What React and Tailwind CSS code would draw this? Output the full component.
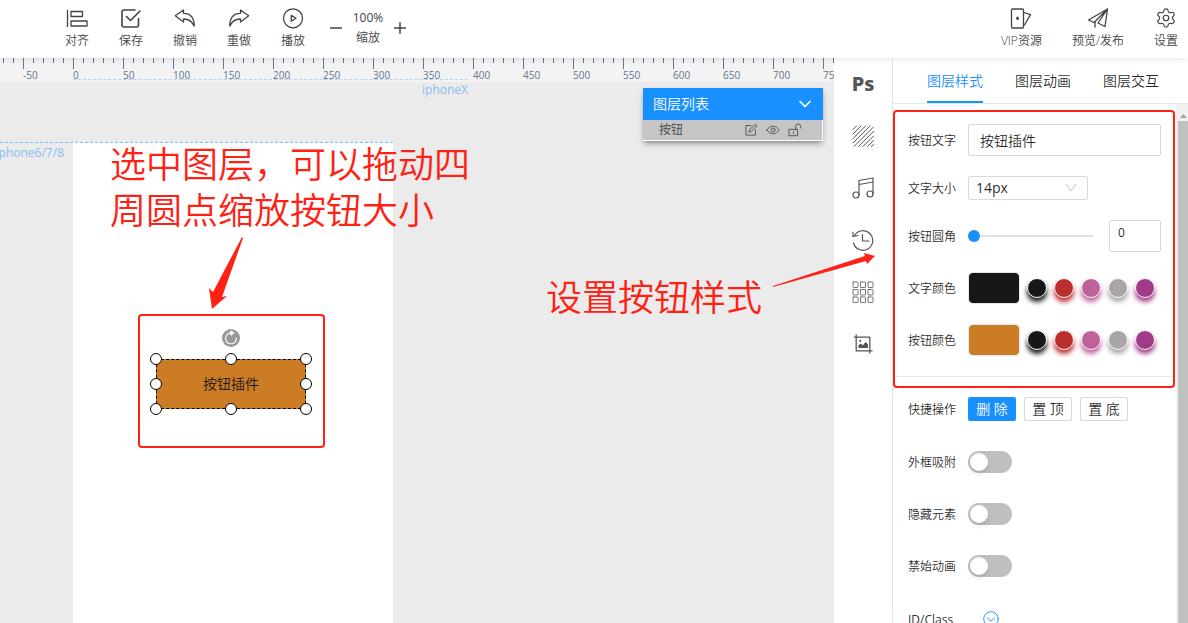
import React, { useState } from "react";
import { Settings, ChevronDown } from "lucide-react";

const Icon = ({ children, size = 22, width = 1.3 }) => (
  <svg
    width={size}
    height={size}
    viewBox="0 0 22 22"
    fill="none"
    stroke="currentColor"
    strokeWidth={width}
    strokeLinejoin="round"
    strokeLinecap="round"
    aria-hidden="true"
  >
    {children}
  </svg>
);

const tools = [
  {
    label: "对齐",
    icon: (
      <Icon>
        <path d="M1.5 3.5v16M5 4.5h11.5v5H5zM5 14h16v5H5z" />
      </Icon>
    ),
  },
  {
    label: "保存",
    icon: (
      <Icon width={1.6}>
        <path d="M15 3H4a2 2 0 0 0-2 2v13a2 2 0 0 0 2 2h12.5a2 2 0 0 0 2-2v-6.5" />
        <path d="M6.5 9.5l4 4L20 4" />
      </Icon>
    ),
  },
  {
    label: "撤销",
    icon: (
      <Icon>
        <path d="M1.3 8.7L9.5 3v3.3C16 6.3 20.2 10 20.3 19c-2.6-5-6.3-7.2-10.8-7v3z" />
      </Icon>
    ),
  },
  {
    label: "重做",
    icon: (
      <Icon>
        <path d="M20.7 8.7L12.5 3v3.3C6 6.3 1.8 10 1.7 19c2.6-5 6.3-7.2 10.8-7v3z" />
      </Icon>
    ),
  },
  {
    label: "播放",
    icon: (
      <Icon>
        <circle cx="11" cy="11.3" r="9.5" />
        <path d="M9.3 8.3v6l4.7-3z" />
      </Icon>
    ),
  },
];

const actions = [
  {
    label: "VIP资源",
    icon: (
      <Icon>
        <rect x="1.5" y="2" width="12" height="19" rx="1" />
        <path d="M14 5.5l6.5 2.2L14.5 18" />
        <path d="M7.5 10.2l1 1.2-1 1.2-1-1.2z" fill="currentColor" />
      </Icon>
    ),
  },
  {
    label: "预览/发布",
    icon: (
      <Icon>
        <path d="M20.5 2L1.5 13l5.5 2.5L20.5 2l-2.5 17.5-7-3.5L20.5 2" />
        <path d="M8 15.5V20" />
      </Icon>
    ),
  },
  { label: "设置", icon: <Settings size={22} strokeWidth={1.3} /> },
];

const rail = [
  {
    label: "Ps",
    icon: <span className="font-['Noto_Sans',sans-serif] text-xl font-extrabold">Ps</span>,
  },
  {
    label: "背景",
    icon: (
      <Icon size={22} width={1}>
        <path d="M1 4.5L4.5 1M1 9l8-8M1 13.5L13.5 1M1 18L18 1M2 21.5L21.5 2M6.5 21.5l15-15M11 21.5L21.5 11M15.5 21.5l6-6M19.5 21.5l2-2" />
      </Icon>
    ),
  },
  {
    label: "音乐",
    icon: (
      <Icon size={22} width={1.2}>
        <circle cx="4" cy="18" r="3" />
        <circle cx="18" cy="17" r="3" />
        <path d="M7 18V3.5l14-2.5v16M7 7.5L21 5" />
      </Icon>
    ),
  },
  {
    label: "历史",
    icon: (
      <Icon size={22} width={1.2}>
        <path d="M2.5 6.5A9.800 9.800 0 1 1 1.500 14M1 3v4.500l5-1M10.500 5.500V12h6.500" />
      </Icon>
    ),
  },
  {
    label: "组件",
    icon: (
      <Icon size={22} width={0.8}>
        {[1, 8.5, 16].map((y) =>
          [1, 8.5, 16].map((x) => (
            <rect key={`${x}-${y}`} x={x} y={y} width="5" height="5.5" rx="0.5" />
          ))
        )}
      </Icon>
    ),
  },
  {
    label: "图片",
    icon: (
      <Icon size={20} width={1.4}>
        <path d="M3.5 1v17.5H21M1.5 3.5h17V21" />
        <path d="M6 15.5v-3l2.5-2 2.5 2 3-4 2.5 3v4z" fill="currentColor" stroke="none" />
        <circle cx="8" cy="7.5" r="1.2" fill="currentColor" stroke="none" />
      </Icon>
    ),
  },
];

const colors = [
  "bg-[#161817] shadow-[0_4px_5px_#161817]",
  "bg-[#bb2e2e] shadow-[0_4px_5px_#bb2e2e]",
  "bg-[#bf629b] shadow-[0_4px_5px_#bf629b]",
  "bg-[#aaa5a8] shadow-[0_4px_5px_#aaa5a8]",
  "bg-[#a23b87] shadow-[0_4px_5px_#a23b87]",
];

const handles = [
  "left-0 top-0",
  "left-1/2 top-0",
  "left-full top-0",
  "left-0 top-1/2",
  "left-full top-1/2",
  "left-0 top-full",
  "left-1/2 top-full",
  "left-full top-full",
];

const marks = Array.from({ length: 17 }, (_, i) => (i - 1) * 50);

const ToolButton = ({ label, icon, className = "" }) => (
  <button className={`flex flex-col items-center gap-1 text-xs ${className}`}>
    {icon}
    <span className="leading-4">{label}</span>
  </button>
);

const Header = () => (
  <header className="relative z-10 flex h-[58px] shrink-0 items-start justify-between bg-white pt-[7px] pr-[10px] pl-[50px] text-[#444] shadow-md shadow-black/5">
    <div className="flex">
      {tools.map((tool) => (
        <ToolButton key={tool.label} {...tool} className="w-[54px]" />
      ))}
      <div className="flex items-center pl-2">
        <button aria-label="缩小" className="flex w-4 justify-center">
          <svg width="12" height="12" stroke="currentColor" strokeWidth="1.5">
            <path d="M0 6h12" />
          </svg>
        </button>
        <div className="flex w-12 flex-col items-center gap-1 text-xs leading-4">
          <span className="font-normal">100%</span>
          <span>缩放</span>
        </div>
        <button aria-label="放大" className="flex w-4 justify-center">
          <svg width="12" height="12" stroke="currentColor" strokeWidth="1.5">
            <path d="M0 6h12M6 0v12" />
          </svg>
        </button>
      </div>
    </div>
    <div className="flex gap-[30px]">
      {actions.map((action) => (
        <ToolButton key={action.label} {...action} />
      ))}
    </div>
  </header>
);

const Ticks = ({ count }) =>
  Array.from({ length: count }, (_, i) => (
    <span key={i} className="h-[5px] w-[10px] shrink-0 border-l border-slate-500"></span>
  ));

const Ruler = () => (
  <div className="flex h-6 overflow-hidden bg-[#f3f3f3] pl-[3px] text-[10px] leading-3 font-normal text-slate-500">
    <Ticks count={2} />
    {marks.map((mark) => (
      <div key={mark} className="flex h-6 w-[50px] shrink-0 flex-col last:w-auto last:min-w-0 last:shrink">
        <div className="flex h-[11px] shrink-0 overflow-hidden">
          <span className="h-3 w-[10px] shrink-0 border-l border-slate-500"></span>
          <Ticks count={4} />
        </div>
        <span>{mark}</span>
      </div>
    ))}
  </div>
);

const LayerList = () => (
  <div className="absolute top-[30px] right-[11px] w-[180px] shadow-md shadow-black/30">
    <button className="flex h-8 w-full items-center justify-between bg-[#1890ff] pr-2 pl-[10px] text-sm text-white">
      图层列表
      <ChevronDown size={20} strokeWidth={2} />
    </button>
    <div className="flex h-[21px] items-center border-r border-b border-white bg-[#c5c5c5] pr-[20px] pl-4 text-xs text-[#444]">
      <span className="flex-1">按钮</span>
      <div className="flex gap-2">
        <button aria-label="编辑">
          <Icon size={14} width={1.3}>
            <path d="M11 4H3v15h15v-8M8 14l1-4 9-8 2.5 2.5-9 8.5z" />
          </Icon>
        </button>
        <button aria-label="显示">
          <Icon size={14} width={1.3}>
            <path d="M1.5 11C6 3 16 3 20.5 11 16 19 6 19 1.5 11z" />
            <circle cx="11" cy="11" r="3" />
          </Icon>
        </button>
        <button aria-label="锁定">
          <Icon size={14} width={1.3}>
            <path d="M2 10h13v10H2zM8.5 14v2.5M12 10V5.5a4 4 0 0 1 8 0V8" />
          </Icon>
        </button>
      </div>
    </div>
  </div>
);

const Canvas = ({ text }) => (
  <section className="relative min-w-0 flex-1 overflow-hidden bg-[#ebebeb]">
    <Ruler />
    <div className="absolute top-[21px] left-[73px] w-[395px] border-t border-dashed border-[#b3d3f3] text-right text-xs font-normal text-[#8abcf0]">
      <div className="pt-[2px]">iphoneX</div>
    </div>
    <div className="absolute top-[84px] bottom-0 left-[73px] w-[320px] bg-white"></div>
    <div className="absolute top-[84px] left-0 w-[393px] border-t border-dashed border-[#7dbcf5] text-xs font-normal text-[#8abcf0]">
      <div className="w-16 pt-[2px]">
        <span className="float-right">iphone6/7/8</span>
      </div>
    </div>

    <div className="absolute top-[301px] left-[156px] h-[50px] w-[150px]">
      <button className="h-full w-full border border-dashed border-black bg-[#cb7c24] text-sm text-[#161817]">
        {text}
      </button>
      {handles.map((pos) => (
        <span
          key={pos}
          className={`absolute h-3 w-3 -translate-1/2 rounded-full border border-black bg-white ${pos}`}
        ></span>
      ))}
      <button
        aria-label="旋转"
        className="absolute -top-[30px] left-1/2 flex h-[18px] w-[18px] -translate-x-1/2 items-center justify-center rounded-full bg-[#999] text-white"
      >
        <Icon size={16} width={1.6}>
          <path d="M12 4A7.5 7.5 0 1 0 18.5 11M11 1.5l4 2.5-4 3z" />
        </Icon>
      </button>
    </div>

    <LayerList />
  </section>
);

// red notes drawn over the editor
const Notes = () => (
  <div className="pointer-events-none absolute inset-0 text-4xl text-[#ff2113]">
    <p className="absolute top-[84px] left-[110px] w-[370px] leading-[46px]">
      选中图层，可以拖动四周圆点缩放按钮大小
    </p>
    <p className="absolute top-[217px] left-[546px] leading-[46px] whitespace-nowrap">设置按钮样式</p>
    <div className="absolute top-[256px] left-[138px] h-[134px] w-[187px] rounded border-2"></div>
    <svg className="absolute top-0 left-0" width="880" height="260" fill="currentColor">
      <path d="M242 179L243 180L222 239L227 238L212 251L209 230L213 234z" />
      <path d="M773 228L865 198L864 195L875 198L867 206L866 203L773 229z" />
    </svg>
  </div>
);

const Row = ({ label, htmlFor, children }) => (
  <div className="flex items-center">
    <label htmlFor={htmlFor} className="w-[60px] shrink-0 pt-px text-xs">
      {label}
    </label>
    {children}
  </div>
);

const ColorRow = ({ label, id, value, onChange }) => (
  <Row label={label} htmlFor={id}>
    <input
      id={id}
      type="color"
      value={value}
      onChange={(e) => onChange(e.target.value)}
      className="h-8 w-[52px] appearance-none rounded border border-gray-200 [&::-webkit-color-swatch]:rounded-sm [&::-webkit-color-swatch]:border-0 [&::-webkit-color-swatch-wrapper]:p-0"
    />
    <div className="flex gap-[7px] pl-[7px]">
      {colors.map((color) => (
        <button
          key={color}
          aria-label={color.slice(4, 11)}
          onClick={() => onChange(color.slice(4, 11))}
          className={`h-5 w-5 rounded-full border border-white ${color}`}
        ></button>
      ))}
    </div>
  </Row>
);

const SwitchRow = ({ label, id }) => (
  <Row label={label} htmlFor={id}>
    <input
      id={id}
      type="checkbox"
      role="switch"
      className="h-[22px] w-11 appearance-none rounded-full bg-[#bfbfbf] p-[2px] before:block before:h-[18px] before:w-[18px] before:rounded-full before:bg-white before:shadow-md checked:bg-[#1890ff] checked:before:translate-x-[22px]"
    />
  </Row>
);

const StylePanel = ({ text, setText }) => {
  const [radius, setRadius] = useState(0);
  const [textColor, setTextColor] = useState("#161817");
  const [buttonColor, setButtonColor] = useState("#cb7c24");

  return (
    <aside className="flex w-[296px] shrink-0 flex-col border-l border-[#e4e4e4] bg-white text-black/85">
      <nav className="flex h-[46px] shrink-0 gap-8 border-b border-[#e8e8e8] pl-[34px] text-sm">
        <button className="border-y-2 border-t-transparent border-b-[#1890ff] text-[#1890ff]">图层样式</button>
        <button>图层动画</button>
        <button>图层交互</button>
      </nav>
      <div className="flex min-h-0 flex-1">
        <div className="min-w-0 flex-1 overflow-hidden">
          <div className="relative flex flex-col gap-5 border-b border-[#e8e8e8] px-[15px] py-5">
            <div className="pointer-events-none absolute top-[6px] right-px -bottom-3 left-0 rounded border-2 border-[#ff2113]"></div>
            <Row label="按钮文字" htmlFor="text">
              <input
                id="text"
                value={text}
                onChange={(e) => setText(e.target.value)}
                className="h-8 w-full min-w-0 rounded-xs border border-[#d9d9d9] px-[11px] text-sm"
              />
            </Row>
            <Row label="文字大小" htmlFor="size">
              <div className="relative">
                <select
                  id="size"
                  defaultValue="14px"
                  className="block h-6 w-[120px] appearance-none rounded-xs border border-[#d9d9d9] pl-[7px] text-sm leading-5 font-normal"
                >
                  <option>12px</option>
                  <option>14px</option>
                  <option>16px</option>
                </select>
                <svg className="pointer-events-none absolute top-2 right-3" width="10" height="8" fill="none" stroke="#bfbfbf">
                  <path d="M0 0l5 7 5-7" />
                </svg>
              </div>
            </Row>
            <Row label="按钮圆角" htmlFor="radius">
              <input
                id="radius"
                type="range"
                max="50"
                value={radius}
                onChange={(e) => setRadius(e.target.value)}
                className="mr-4 h-[2px] w-full min-w-0 appearance-none bg-[#e1e1e1] [&::-webkit-slider-thumb]:h-3 [&::-webkit-slider-thumb]:w-3 [&::-webkit-slider-thumb]:appearance-none [&::-webkit-slider-thumb]:rounded-full [&::-webkit-slider-thumb]:bg-[#1890ff]"
              />
              <input
                aria-label="圆角数值"
                value={radius}
                onChange={(e) => setRadius(e.target.value)}
                className="h-8 w-[52px] shrink-0 rounded-xs border border-[#d9d9d9] px-2 pb-2 text-xs font-normal"
              />
            </Row>
            <ColorRow label="文字颜色" id="text-color" value={textColor} onChange={setTextColor} />
            <ColorRow label="按钮颜色" id="button-color" value={buttonColor} onChange={setButtonColor} />
          </div>
          <div className="flex flex-col gap-[30px] px-[15px] pt-5">
            <Row label="快捷操作">
              <div className="flex gap-2 text-sm">
                <button className="h-6 w-12 rounded-xs bg-[#1890ff] text-white">删 除</button>
                <button className="h-6 w-12 rounded-xs border border-[#d9d9d9]">置 顶</button>
                <button className="h-6 w-12 rounded-xs border border-[#d9d9d9]">置 底</button>
              </div>
            </Row>
            <SwitchRow label="外框吸附" id="snap" />
            <SwitchRow label="隐藏元素" id="hide" />
            <SwitchRow label="禁始动画" id="no-anim" />
            <Row label={<span className="font-normal">ID/Class</span>}>
              <button aria-label="展开" className="flex h-6 w-[46px] items-center justify-center text-[#1890ff]">
                <Icon size={16} width={1.3}>
                  <circle cx="11" cy="11" r="10" />
                  <path d="M6 9.5l5 4.5 5-4.5" />
                </Icon>
              </button>
            </Row>
          </div>
        </div>
        <div className="flex w-3 shrink-0 flex-col items-end bg-[#f1f1f1] pt-2">
          <svg width="10" height="9" fill="#a3a3a3">
            <path d="M2 6h7L5.5 2z" />
          </svg>
          <div className="w-[10px] flex-1 bg-[#c1c1c1]"></div>
        </div>
      </div>
    </aside>
  );
};

const App = () => {
  const [text, setText] = useState("按钮插件");

  return (
    <div className="flex h-screen flex-col overflow-hidden font-['Open_Sans','Noto_Sans_CJK_SC',sans-serif] font-[350]">
      <Header />
      <main className="relative flex min-h-0 flex-1">
        <Canvas text={text} />
        <div className="flex w-[58px] shrink-0 flex-col bg-white text-[#555]">
          {rail.map((item) => (
            <button key={item.label} aria-label={item.label} className="flex h-[52px] items-center justify-center">
              {item.icon}
            </button>
          ))}
        </div>
        <StylePanel text={text} setText={setText} />
        <Notes />
      </main>
    </div>
  );
};

export default App;
